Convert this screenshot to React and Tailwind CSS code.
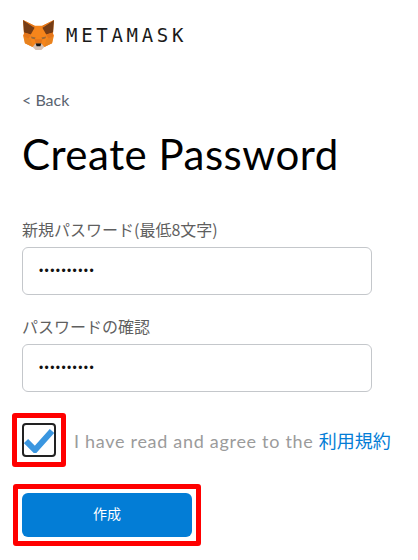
import React from "react";

const Fox = () => (
  <svg width="33" height="30" viewBox="0 0 34 31" className="block">
    <polygon points="1,0 13,6 21,6 33,0 32,14 33,16 31,24 23,28 11,28 3,24 1,16 2,14" fill="#f6851b" />
    <polygon points="1,0 13,8 9,15 2,13" fill="#763d16" />
    <polygon points="33,0 21,8 25,15 32,13" fill="#763d16" />
    <polygon points="1,0 13,6 13,8" fill="#e2761b" />
    <polygon points="33,0 21,6 21,8" fill="#e2761b" />
    <polygon points="13,8 21,8 20,16 14,16" fill="#f6851b" />
    <polygon points="2,13 9,15 6,21 2,17" fill="#e4761b" />
    <polygon points="32,13 25,15 28,21 32,17" fill="#e4761b" />
    <polygon points="9,17 14,18 13,20 10,19" fill="#9a6a3a" />
    <polygon points="25,17 20,18 21,20 24,19" fill="#9a6a3a" />
    <polygon points="3,24 11,28 9,20 2,17" fill="#e8821e" />
    <polygon points="31,24 23,28 25,20 32,17" fill="#e8821e" />
    <polygon points="11,28 14,24 20,24 23,28 20,31 14,31" fill="#d7c1b3" />
    <polygon points="14,24 20,24 19,27 15,27" fill="#161616" />
    <polygon points="13,20 21,20 20,24 14,24" fill="#e4761b" />
  </svg>
);

const labelCls = "h-[22px] text-[16px] leading-[22px] text-[#5f5f5f] whitespace-nowrap font-['Noto_Sans_CJK_JP',sans-serif]";
const inputCls = "mt-[7px] w-[350px] h-[48px] border border-[#c4c7cb] rounded-[6px] flex items-center pl-[16px] text-[#111] text-[12px] tracking-[1.4px] font-['Liberation_Sans',sans-serif]";

export default function App() {
  return (
    <div className="w-[418px] h-[560px] bg-white overflow-hidden pl-[22px] pt-[20px] font-['Lato','Noto_Sans_CJK_JP',sans-serif]">
      <div className="flex items-center h-[30px]">
        <Fox />
        <span className="ml-[11px] font-['DejaVu_Sans_Mono',monospace] text-[19px] leading-none font-normal tracking-[3.7px] text-[#1a1a1a]">METAMASK</span>
      </div>

      <div className="mt-[40px] h-[20px] text-[16px] leading-[20px] text-[#5a6470]">&lt; Back</div>

      <h1 className="mt-[19px] h-[50px] text-[42px] leading-[50px] font-normal text-black whitespace-nowrap tracking-[0.5px]">Create Password</h1>

      <div className="mt-[39px]">
        <div className={labelCls}>新規パスワード(最低8文字)</div>
        <div className={inputCls}>••••••••••</div>
      </div>

      <div className="mt-[20px]">
        <div className={labelCls}>パスワードの確認</div>
        <div className={inputCls}>••••••••••</div>
      </div>

      <div className="mt-[21px] flex items-center -ml-[10px]">
        <div className="w-[54px] h-[54px] border-[5px] border-[#ff0000] rounded-[3px] flex items-center justify-center">
          <div className="w-[34px] h-[34px] border-2 border-[#222] rounded-[4px] flex items-center justify-center">
            <svg width="30" height="26" viewBox="0 0 30 26">
              <path d="M2 14 L11 23 L28 4" fill="none" stroke="#3a96e0" strokeWidth="6" />
            </svg>
          </div>
        </div>
        <div className="ml-[8px] text-[18px] leading-[22px] tracking-[0.7px] text-[#9b9b9b] whitespace-nowrap">
          I have read and agree to the <span className="text-[#037dd6] tracking-normal font-['Noto_Sans_CJK_JP',sans-serif] text-[18px]">利用規約</span>
        </div>
      </div>

      <div className="mt-[17px] -ml-[9px] w-[188px] h-[62px] border-[5px] border-[#ff0000] rounded-[3px] pl-[4px] pt-[4px]">
        <button className="w-[170px] h-[44px] bg-[#037dd6] rounded-[6px] text-white text-[14px] font-normal pb-[4px] font-['Noto_Sans_CJK_JP',sans-serif]">作成</button>
      </div>
    </div>
  );
}
